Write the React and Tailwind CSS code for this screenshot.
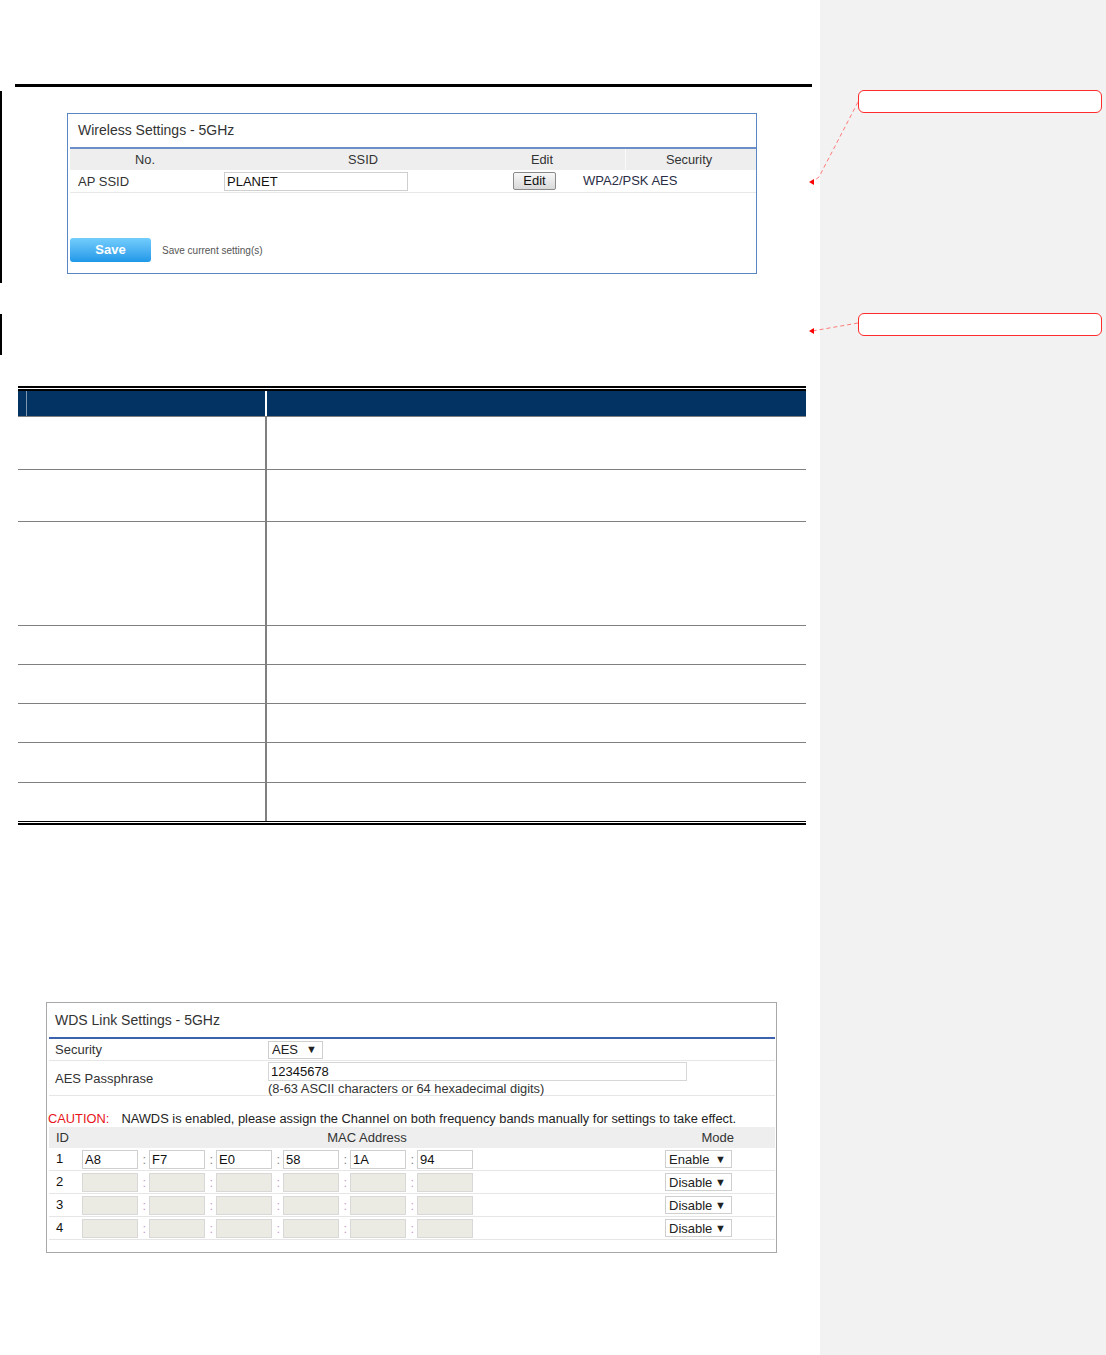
import React from 'react';

const rowHeights = [53, 52, 104, 39, 39, 39, 40, 39];

const macRows = [
  { id: 1, parts: ['A8', 'F7', 'E0', '58', '1A', '94'], mode: 'Enable' },
  { id: 2, parts: null, mode: 'Disable' },
  { id: 3, parts: null, mode: 'Disable' },
  { id: 4, parts: null, mode: 'Disable' },
];

const Select = ({ value, className }) => (
  <div className={`h-[18px] border border-[#cfcfcf] bg-white flex items-center justify-between pl-[3px] pr-[5px] text-[13px] text-[#222] leading-none ${className}`}>
    <span>{value}</span>
    <span className="text-[11px]">▼</span>
  </div>
);

const WirelessBox = () => (
  <div className="ml-[65px] w-[690px] h-[161px] border border-[#5b86c4] pl-[2px] flex flex-col text-[#333]">
    <div className="h-[32px] pl-[8px] flex items-center text-[14px]">Wireless Settings - 5GHz</div>
    <div className="mt-px h-[2px] bg-[#6b8fc8]" />
    <div className="h-[21px] bg-[#eeeeee] flex items-center text-[12.8px]">
      <div className="w-[150px] text-center">No.</div>
      <div className="w-[286px] text-center">SSID</div>
      <div className="w-[72px] text-center">Edit</div>
      <div className="w-[47px] h-full" />
      <div className="w-[131px] h-full border-l border-[#fafafa] flex items-center justify-center pr-[4px]">Security</div>
    </div>
    <div className="h-[23px] flex items-center border-b border-[#e8e8e8] text-[13px]">
      <div className="w-[154px] pl-[8px] pt-px">AP SSID</div>
      <div className="w-[184px] h-[19px] border border-[#cfcfcf] pl-[2px] leading-[17px] text-[#111]">PLANET</div>
      <div className="w-[105px]" />
      <div className="w-[43px] h-[18px] border border-[#8a8a8a] rounded-[2px] bg-linear-to-b from-[#f7f7f7] to-[#d9d9d9] text-center leading-[16px] text-[#111]">Edit</div>
      <div className="w-[27px]" />
      <div className="text-[#2a2d45]">WPA2/PSK AES</div>
    </div>
    <div className="mt-[45px] flex items-center">
      <div className="w-[81px] h-[24px] rounded-[3px] bg-linear-to-b from-[#72cdfc] to-[#1c98e8] text-white font-bold text-[13px] flex items-center justify-center">Save</div>
      <div className="ml-[11px] text-[10px] text-[#555]">Save current setting(s)</div>
    </div>
  </div>
);

const DocTable = () => (
  <div className="ml-[18px] w-[788px]">
    <div className="h-[2px] bg-black" />
    <div className="h-px" />
    <div className="h-[2px] bg-black" />
    <div className="h-[25px] flex bg-[#033363]">
      <div className="w-[249px] border-r-2 border-white">
        <div className="ml-[8px] w-px h-full bg-[#7f95b0]" />
      </div>
      <div className="flex-1" />
    </div>
    {rowHeights.map((h, i) => (
      <div key={i} className="flex border-t border-[#808080]" style={{ height: h }}>
        <div className="w-[249px] border-r-2 border-[#808080]" />
        <div className="flex-1" />
      </div>
    ))}
    <div className="h-px bg-black" />
    <div className="h-px" />
    <div className="h-[2px] bg-black" />
  </div>
);

const MacInput = ({ value, disabled }) => (
  <div className={`w-[56px] h-[19px] border text-[13px] leading-[17px] pl-[2px] text-[#111] ${disabled ? 'bg-[#ebebe4] border-[#d8d8d8]' : 'bg-white border-[#cfcfcf]'}`}>
    {value}
  </div>
);

const WdsBox = () => (
  <div className="ml-[46px] w-[731px] h-[251px] border border-[#a8a8a8] pl-[2px] pr-px flex flex-col text-[#333] text-[13px]">
    <div className="h-[34px] pl-[6px] flex items-center text-[14px]">WDS Link Settings - 5GHz</div>
    <div className="h-[2px] bg-[#3b63ad]" />
    <div className="h-[22px] flex items-center border-b border-[#e6e6e6]">
      <div className="w-[219px] pl-[6px]">Security</div>
      <Select value="AES" className="w-[55px]" />
    </div>
    <div className="h-[35px] flex border-b border-[#e6e6e6]">
      <div className="w-[219px] pl-[6px] self-center pt-[2px]">AES Passphrase</div>
      <div className="flex flex-col">
        <div className="mt-px w-[419px] h-[19px] border border-[#d6d6d6] pl-[2px] leading-[17px] text-[#111]">12345678</div>
        <div className="leading-[15px] text-[12.85px]">(8-63 ASCII characters or 64 hexadecimal digits)</div>
      </div>
    </div>
    <div className="h-[31px] pt-[14px] flex items-center ml-[-1px] text-[12.85px]">
      <span className="text-[#e8141a]">CAUTION:</span>
      <span className="ml-[12px] text-[#222]">NAWDS is enabled, please assign the Channel on both frequency bands manually for settings to take effect.</span>
    </div>
    <div className="h-[21px] bg-[#eeeeee] flex items-center">
      <div className="w-[33px] pl-[7px]">ID</div>
      <div className="w-[570px] text-center">MAC Address</div>
      <div className="flex-1 text-right pr-[41px]">Mode</div>
    </div>
    {macRows.map((r) => (
      <div key={r.id} className="h-[23px] flex items-center border-b border-[#e6e6e6]">
        <div className="w-[33px] pl-[7px] text-[#111]">{r.id}</div>
        {[0, 1, 2, 3, 4, 5].map((k) => (
          <React.Fragment key={k}>
            {k > 0 && (
              <div className={`w-[11px] text-right pr-[3px] leading-none ${r.parts ? 'text-[#888]' : 'text-[#c79ccc]'}`}>:</div>
            )}
            <MacInput value={r.parts ? r.parts[k] : ''} disabled={!r.parts} />
          </React.Fragment>
        ))}
        <div className="flex-1" />
        <Select value={r.mode} className="w-[67px] mr-[43px]" />
      </div>
    ))}
  </div>
);

export default function App() {
  return (
    <div className="relative flex w-[1106px] min-h-[1355px] font-['Liberation_Sans',Arial,sans-serif]">
      <div className="w-[820px] bg-white">
        <div className="h-[84px]" />
        <div className="ml-[15px] w-[797px] h-[3px] bg-black" />
        <div className="mt-[4px] h-[192px] border-l-2 border-black pt-[22px]">
          <WirelessBox />
        </div>
        <div className="mt-[31px] h-[41px] border-l-2 border-black" />
        <div className="mt-[31px]">
          <DocTable />
        </div>
        <div className="mt-[177px]">
          <WdsBox />
        </div>
      </div>
      <div className="w-[286px] bg-[#f2f2f2] pt-[90px] pl-[38px]">
        <div className="w-[244px] h-[23px] border border-[#ff2a2a] rounded-[6px] bg-white" />
        <div className="mt-[200px] w-[244px] h-[23px] border border-[#ff2a2a] rounded-[6px] bg-white" />
      </div>
      <svg className="absolute left-[800px] top-[90px] pointer-events-none" width="70" height="260" viewBox="800 90 70 260">
        <path d="M858 102 L819 177 L812 182" fill="none" stroke="#ff7a7a" strokeWidth="1" strokeDasharray="4 3" />
        <path d="M858 323 L818 330 L812 331" fill="none" stroke="#ff7a7a" strokeWidth="1" strokeDasharray="4 3" />
        <path d="M809 182 L814 179 L814 185 Z" fill="#ff0000" />
        <path d="M809 331 L814 328 L814 334 Z" fill="#ff0000" />
      </svg>
    </div>
  );
}
